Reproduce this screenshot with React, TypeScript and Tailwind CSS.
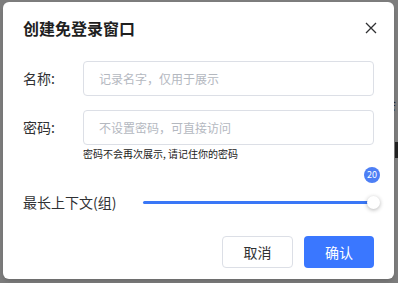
import { FC } from 'react';

const font = { fontFamily: '"Noto Sans CJK SC", "Noto Sans", sans-serif' };

const Field: FC<{ label: string; placeholder: string }> = ({ label, placeholder }) => (
   <div className="flex items-center">
      <span className="w-[60px] text-[14px] text-[#303133]">{label}</span>
      <div className="flex h-[35px] flex-1 items-center rounded-[4px] border border-[#dcdfe6] pl-[15px] text-[12px] text-[#b4b8bf]">
         {placeholder}
      </div>
   </div>
);

const App: FC = () => {
   return (
      <div className="relative h-[283px] w-[398px] overflow-hidden bg-[#7d7d7d]" style={font}>
         <div className="absolute left-[383px] top-[94px] text-[13px] text-[#222]">会</div>
         <div className="absolute left-[395px] top-[142px] h-[16px] w-[4px] bg-[#222]"></div>

         <div className="absolute left-[3px] top-[2px] h-[277px] w-[391px] rounded-[6px] bg-white px-[20px] shadow-md">
            <div className="flex items-center justify-between pt-[14px]">
               <h2 className="text-[16px] font-bold leading-[24px] text-[#1f1f1f]">创建免登录窗口</h2>
               <svg width="12" height="12" viewBox="0 0 12 12" className="mr-[-3px]">
                  <path d="M1 1 L11 11 M11 1 L1 11" stroke="#303133" strokeWidth="1.3" />
               </svg>
            </div>

            <div className="mt-[21px]">
               <Field label="名称:" placeholder="记录名字，仅用于展示" />
            </div>
            <div className="mt-[14px]">
               <Field label="密码:" placeholder="不设置密码，可直接访问" />
               <p className="ml-[60px] mt-[2px] text-[10px] leading-[14px] text-[#222]">
                  密码不会再次展示, 请记住你的密码
               </p>
            </div>

            <div className="mt-[31px] flex items-center">
               <span className="w-[120px] text-[14px] text-[#303133]">最长上下文(组)</span>
               <div className="relative h-[3px] flex-1 rounded-full bg-[#3a77f6]">
                  <div className="absolute right-[-6px] top-[-34px] flex h-[16px] w-[16px] items-center justify-center rounded-full bg-[#4d7ff5] text-[9px] text-white">
                     20
                  </div>
                  <div className="absolute right-[-6px] top-[-5px] h-[13px] w-[13px] rounded-full bg-white shadow-[0_1px_4px_rgba(0,0,0,0.3)]"></div>
               </div>
            </div>

            <div className="mt-[23px] flex justify-end gap-[11px]">
               <button className="h-[32px] w-[71px] rounded-[4px] border border-[#dcdfe6] bg-white text-[14px] text-[#303133]">
                  取消
               </button>
               <button className="h-[32px] w-[70px] rounded-[4px] bg-[#3a77ff] text-[14px] text-white">
                  确认
               </button>
            </div>
         </div>
      </div>
   );
};

export default App;
